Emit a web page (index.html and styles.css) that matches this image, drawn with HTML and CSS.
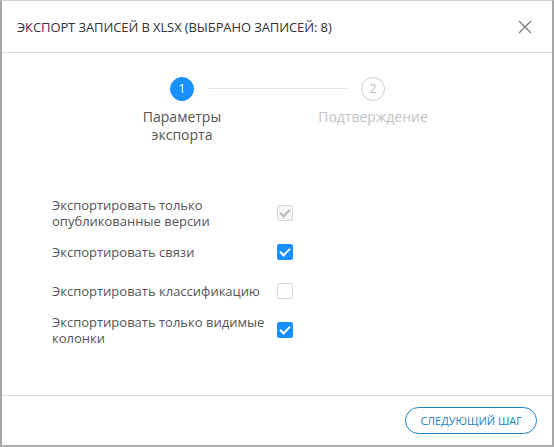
FILE: index.html
```html
<!DOCTYPE html>
<html>
<head>
    <title>Экспорт записей</title>
    <meta name="viewport" content="width=device-width, initial-scale=1.0">
    <link rel="stylesheet" href="styles.css">
</head>
<body>
    <div class="dialog">
        <div class="dialog-header">
            <span class="dialog-title">Экспорт записей в XLSX (выбрано записей: 8)</span>
            <button class="close-button" aria-label="Закрыть">
                <svg width="14" height="14" viewBox="0 0 14 14">
                    <path d="M1 1 L13 13 M13 1 L1 13" stroke="#777" stroke-width="1.2" fill="none"/>
                </svg>
            </button>
        </div>

        <div class="dialog-body">
            <div class="steps">
                <div class="step-icon active">1</div>
                <div class="step-tail"></div>
                <div class="step-icon">2</div>
                <div class="step-label active">Параметры экспорта</div>
                <div class="step-label">Подтверждение</div>
            </div>

            <div class="options">
                <label class="option">
                    <span class="option-text">Экспортировать только опубликованные версии</span>
                    <span class="checkbox checked disabled"></span>
                </label>
                <label class="option">
                    <span class="option-text">Экспортировать связи</span>
                    <span class="checkbox checked"></span>
                </label>
                <label class="option">
                    <span class="option-text">Экспортировать классификацию</span>
                    <span class="checkbox"></span>
                </label>
                <label class="option">
                    <span class="option-text">Экспортировать только видимые колонки</span>
                    <span class="checkbox checked"></span>
                </label>
            </div>
        </div>

        <div class="dialog-footer">
            <button class="next-button">Следующий шаг</button>
        </div>
    </div>
</body>
</html>
```

FILE: styles.css
```css
/* базовые стили */
body {
    margin: 0;
    padding: 0;
    background: #fff;
    font-family: "Open Sans", "Noto Sans", sans-serif;
    color: #555;
}

.dialog {
    box-sizing: border-box;
    width: 554px;
    height: 447px;
    border: 1px solid #cfcfcf;
    border-left: 2px solid #a6a6a6;
    border-right: 2px solid #a6a6a6;
    border-bottom: 2px solid #b0b0b0;
    display: flex;
    flex-direction: column;
    background: #fff;
}

.dialog-header {
    height: 51px;
    display: flex;
    align-items: center;
    justify-content: space-between;
    padding: 0 20px 0 15px;
    border-bottom: 1px solid #dcdcdc;
}

.dialog-title {
    font-size: 13px;
    color: #333;
    text-transform: uppercase;
    letter-spacing: -0.1px;
}

.close-button {
    background: none;
    border: none;
    padding: 0;
    width: 14px;
    height: 14px;
    cursor: pointer;
}

.dialog-body {
    flex: 1;
    padding-top: 24px;
}

/* шаги */
.steps {
    display: grid;
    grid-template-columns: 24px 167px 24px;
    justify-content: center;
    row-gap: 7px;
    margin-left: 1px;
}

.step-icon {
    box-sizing: border-box;
    width: 24px;
    height: 24px;
    border-radius: 50%;
    border: 1px solid #ccc;
    color: #bbb;
    font-size: 12px;
    line-height: 22px;
    text-align: center;
}

.step-icon.active {
    background: #1890ff;
    border-color: #1890ff;
    color: #fff;
}

.step-tail {
    height: 1px;
    background: #e8e8e8;
    margin: 11px 12px 0 14px;
}

.step-label {
    margin: 0 -40px;
    text-align: center;
    font-size: 14px;
    line-height: 18px;
    color: #c3c3c3;
}

.step-label.active {
    grid-column: 1;
    color: #555;
}

.step-label:last-child {
    grid-column: 3;
    margin: 0 -70px;
    white-space: nowrap;
}

/* параметры */
.options {
    margin-top: 53px;
    padding-left: 50px;
    display: flex;
    flex-direction: column;
    gap: 7px;
}

.option {
    display: flex;
    align-items: center;
    min-height: 32px;
    cursor: pointer;
}

.option-text {
    width: 225px;
    font-size: 13px;
    line-height: 16px;
    color: #555;
}

.checkbox {
    box-sizing: border-box;
    position: relative;
    width: 16px;
    height: 16px;
    border: 1px solid #d9d9d9;
    border-radius: 2px;
    background: #fff;
}

.checkbox.checked {
    background: #1890ff;
    border-color: #1890ff;
}

.checkbox.checked::after {
    content: "";
    position: absolute;
    left: 4px;
    top: 1px;
    width: 4px;
    height: 8px;
    border: solid #fff;
    border-width: 0 2px 2px 0;
    transform: rotate(45deg);
}

.checkbox.disabled {
    background: #f5f5f5;
    border-color: #d9d9d9;
}

.checkbox.disabled::after {
    border-color: #b8b8b8;
}

.dialog-footer {
    height: 49px;
    border-top: 1px solid #dcdcdc;
    display: flex;
    align-items: center;
    justify-content: flex-end;
    padding-right: 15px;
}

.next-button {
    height: 27px;
    padding: 0 14px;
    border: 1px solid #1b7fc4;
    border-radius: 14px;
    background: #fff;
    color: #1b7fc4;
    font-family: "Open Sans", "Noto Sans", sans-serif;
    font-size: 11px;
    text-transform: uppercase;
    cursor: pointer;
}
```
